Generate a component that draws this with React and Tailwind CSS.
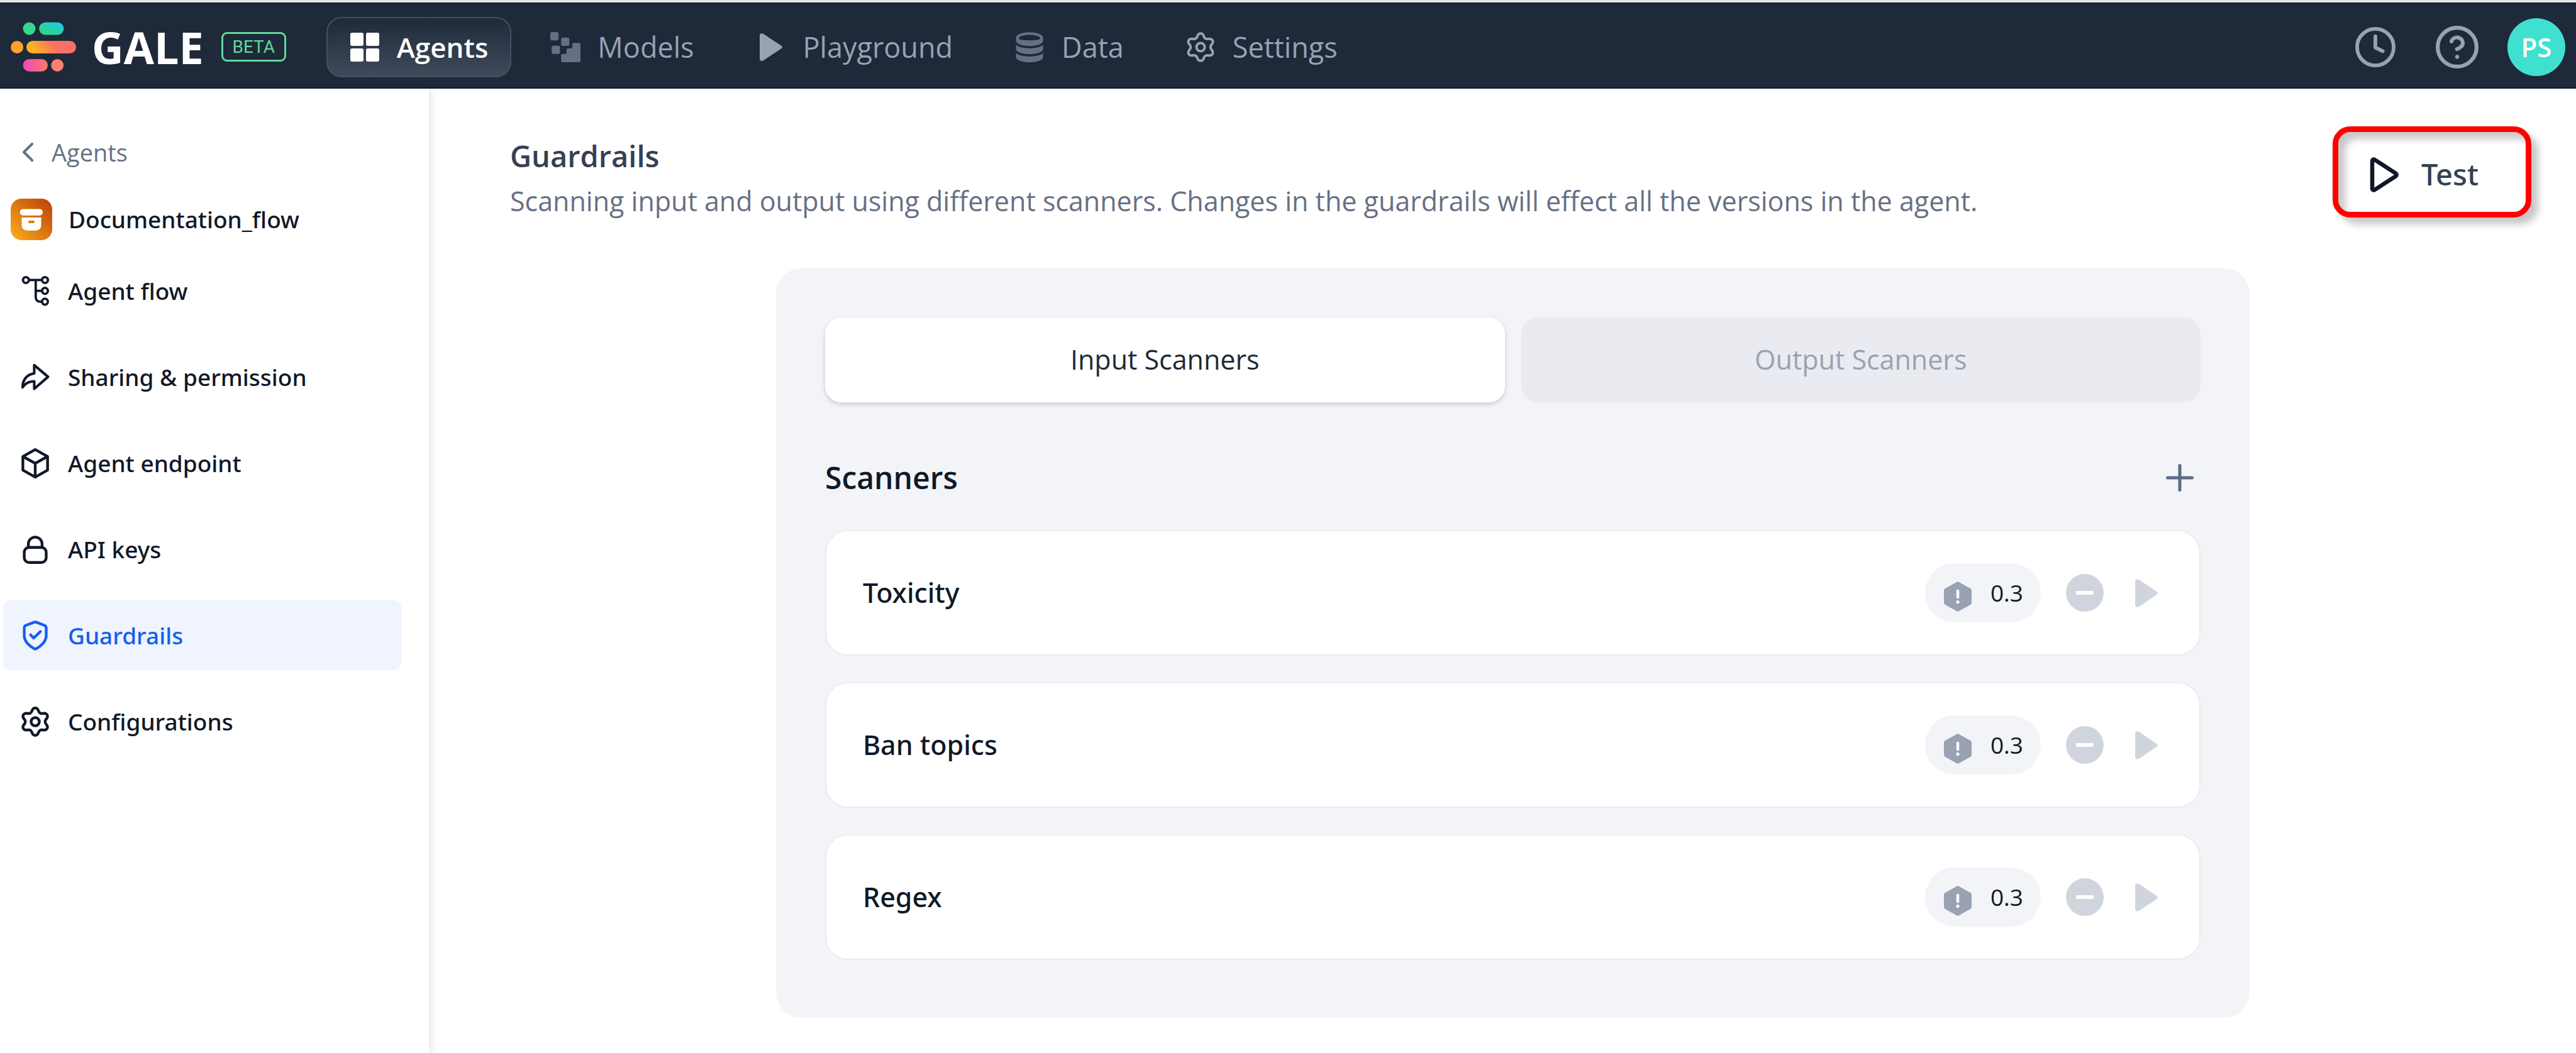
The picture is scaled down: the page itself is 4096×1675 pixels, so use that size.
const iconSlot = "flex w-12 shrink-0 items-center justify-center";

const GEAR =
  "M9.3951 19.3711L9.97955 20.6856C10.1533 21.0768 10.4368 21.4093 10.7958 21.6426C11.1547 21.8759 11.5737 22.0001 12.0018 22C12.4299 22.0001 12.8488 21.8759 13.2078 21.6426C13.5667 21.4093 13.8503 21.0768 14.024 20.6856L14.6084 19.3711C14.8165 18.9047 15.1664 18.5159 15.6084 18.26C16.0532 18.0034 16.5678 17.8941 17.0784 17.9478L18.5084 18.1C18.9341 18.145 19.3637 18.0656 19.7451 17.8713C20.1265 17.6771 20.4434 17.3763 20.6573 17.0056C20.8714 16.635 20.9735 16.2103 20.951 15.7829C20.9285 15.3555 20.7825 14.9438 20.5307 14.5978L19.684 13.4344C19.3825 13.0171 19.2214 12.5148 19.224 12C19.2239 11.4866 19.3865 10.9864 19.6884 10.5711L20.5351 9.40778C20.787 9.06175 20.933 8.65007 20.9555 8.22267C20.978 7.79528 20.8759 7.37054 20.6618 7C20.4479 6.62923 20.131 6.32849 19.7496 6.13423C19.3681 5.93997 18.9386 5.86053 18.5129 5.90556L17.0829 6.05778C16.5722 6.11141 16.0577 6.00212 15.6129 5.74556C15.17 5.48825 14.82 5.09736 14.6129 4.62889L14.024 3.31444C13.8503 2.92317 13.5667 2.59072 13.2078 2.3574C12.8488 2.12408 12.4299 1.99993 12.0018 2C11.5737 1.99993 11.1547 2.12408 10.7958 2.3574C10.4368 2.59072 10.1533 2.92317 9.97955 3.31444L9.3951 4.62889C9.18803 5.09736 8.83798 5.48825 8.3951 5.74556C7.95032 6.00212 7.43577 6.11141 6.9251 6.05778L5.49066 5.90556C5.06499 5.86053 4.6354 5.93997 4.25397 6.13423C3.87255 6.32849 3.55567 6.62923 3.34177 7C3.12759 7.37054 3.02555 7.79528 3.04804 8.22267C3.07052 8.65007 3.21656 9.06175 3.46844 9.40778L4.3151 10.5711C4.61704 10.9864 4.77964 11.4866 4.77955 12C4.77964 12.5134 4.61704 13.0137 4.3151 13.4289L3.46844 14.5922C3.21656 14.9382 3.07052 15.3499 3.04804 15.7773C3.02555 16.2047 3.12759 16.6295 3.34177 17C3.55589 17.3706 3.8728 17.6712 4.25417 17.8654C4.63554 18.0596 5.06502 18.1392 5.49066 18.0944L6.92066 17.9422C7.43133 17.8886 7.94587 17.9979 8.39066 18.2544C8.83519 18.511 9.18687 18.902 9.3951 19.3711Z";

const SHIELD =
  "M20 12C20 16.9084 14.646 20.4784 12.698 21.6149C12.4766 21.744 12.3659 21.8086 12.2097 21.8421C12.0884 21.8681 11.9116 21.8681 11.7903 21.8421C11.6341 21.8086 11.5234 21.744 11.302 21.6149C9.35396 20.4784 4 16.9084 4 12V7.21759C4 6.41808 4 6.01833 4.13076 5.6747C4.24627 5.37113 4.43398 5.10027 4.67766 4.88552C4.9535 4.64243 5.3278 4.50207 6.0764 4.22134L11.4382 2.21067C11.6461 2.13271 11.75 2.09373 11.857 2.07827C11.9518 2.06457 12.0482 2.06457 12.143 2.07827C12.25 2.09373 12.3539 2.13271 12.5618 2.21067L17.9236 4.22134C18.6722 4.50207 19.0465 4.64243 19.3223 4.88552C19.566 5.10027 19.7537 5.37113 19.8692 5.6747C20 6.01833 20 6.41808 20 7.21759V12Z";

function Stroke({ className, width = 2, children, viewBox = "1 1 22 22" }) {
  return (
    <svg
      className={className}
      viewBox={viewBox}
      fill="none"
      stroke="currentColor"
      strokeWidth={width}
      strokeLinecap="round"
      strokeLinejoin="round"
      aria-hidden="true"
    >
      {children}
    </svg>
  );
}

function Gear({ width }) {
  return (
    <Stroke className="size-12" width={width}>
      <path d={GEAR} />
      <circle cx="12" cy="12" r="3" />
    </Stroke>
  );
}

function Logo() {
  return (
    <svg className="h-[79px] w-[104px]" viewBox="18 36.5 110 83" aria-hidden="true">
      <defs>
        <linearGradient id="g1" x1="0" y1="1" x2="1" y2="0">
          <stop offset="0.2" stopColor="#32d583" />
          <stop offset="1" stopColor="#1cc8f5" />
        </linearGradient>
        <linearGradient id="g2" x1="0" y1="0.6" x2="1" y2="0.4">
          <stop offset="0.15" stopColor="#fdb022" />
          <stop offset="0.6" stopColor="#f97066" />
        </linearGradient>
        <linearGradient id="g3" x1="0" y1="0" x2="1" y2="0">
          <stop offset="0" stopColor="#ee46bc" />
          <stop offset="1" stopColor="#fa7a68" />
        </linearGradient>
      </defs>
      <circle cx="49.2" cy="47.3" r="10.6" fill="#35d68e" />
      <rect x="65.7" y="36.7" width="41.6" height="21.2" rx="10.6" fill="url(#g1)" />
      <circle cx="28.7" cy="78.5" r="10.6" fill="#fba12c" />
      <rect x="44.3" y="67.9" width="83.7" height="21.2" rx="10.6" fill="url(#g2)" />
      <rect x="38.7" y="98.5" width="41.6" height="21" rx="10.5" fill="url(#g3)" />
      <circle cx="96.5" cy="109" r="10.5" fill="#fb8070" />
    </svg>
  );
}

const topNav = [
  {
    label: "Agents",
    active: true,
    icon: (
      <svg className="size-[46px]" viewBox="0 0 46 46" fill="currentColor" aria-hidden="true">
        <rect x="0" y="0" width="21" height="21" rx="3" />
        <rect x="25" y="0" width="21" height="21" rx="3" />
        <rect x="0" y="25" width="21" height="21" rx="3" />
        <rect x="25" y="25" width="21" height="21" rx="3" />
      </svg>
    ),
  },
  {
    label: "Models",
    icon: (
      <svg className="size-12 text-[#667085]" viewBox="40 39 153 153" fill="currentColor" aria-hidden="true">
        <rect x="40" y="39" width="42" height="42" rx="9" />
        <rect x="95" y="67" width="42" height="42" rx="9" />
        <rect x="47" y="108" width="42" height="42" rx="9" />
        <path d="M160 94h24q9 0 9 9v80q0 9-9 9h-80q-9 0-9-9v-24q0-9 9-9h18v-19q0-9 9-9h20v-19q0-9 9-9z" />
      </svg>
    ),
  },
  {
    label: "Playground",
    icon: (
      <svg className="h-11 w-9" viewBox="0 0 36 44" fill="currentColor" aria-hidden="true">
        <path d="M0 3.5C0 .6 3-.9 5.600.8L34 19.500c2.600 1.700 2.600 3.300 0 5L5.600 43.200C3 44.900 0 43.400 0 40.500z" />
      </svg>
    ),
  },
  {
    label: "Data",
    icon: (
      <svg className="size-12 text-[#667085]" viewBox="32 37 148 156" fill="currentColor" aria-hidden="true">
        <path
          fillRule="evenodd"
          d="M106 38c39 0 70 12 70 28v16c0 16-31 27-70 27s-70-11-70-27V66c0-16 31-28 70-28zm0 14c-32 0-55 8-55 17s23 11 55 11 55-2 55-11-23-17-55-17z"
        />
        <path d="M36 104c14 12 40 17 70 17s56-5 70-17v20c0 16-31 27-70 27s-70-11-70-27z" />
        <path d="M36 146c14 12 40 17 70 17s56-5 70-17v20c0 16-31 27-70 27s-70-11-70-27z" />
      </svg>
    ),
  },
  { label: "Settings", icon: <Gear width={1.8} /> },
];

function TopBar() {
  return (
    <header className="flex h-[137px] items-center justify-between border-y-2 border-[#101d30] bg-[#1e2939] pt-1 pr-[17px] pl-[17px]">
      <div className="flex items-center">
        <Logo />
        <span className="ml-[25px] text-[70px] leading-none font-bold text-white">GALE</span>
        <span className="ml-7 flex h-[47px] w-[103px] items-center justify-center rounded-[9px] border-3 border-[#5fd99a] font-['Roboto',sans-serif] text-[28px] text-[#5fd99a]">
          BETA
        </span>
        <nav className="ml-16 flex items-center gap-[26px]" aria-label="Primary">
          {topNav.map((item) => (
            <a
              key={item.label}
              href="#"
              aria-current={item.active ? "page" : undefined}
              className={
                item.active
                  ? "flex h-24 items-center gap-[27px] rounded-3xl border-2 border-[#455062] bg-linear-to-b from-[#1f2a3a] to-[#3f4a5a] px-[35px] text-[44px] font-semibold text-white"
                  : "flex h-24 items-center gap-[27px] px-9 text-[45px] text-[#98a2b3]"
              }
            >
              <span className={iconSlot}>{item.icon}</span>
              <span>{item.label}</span>
            </a>
          ))}
        </nav>
      </div>
      <div className="flex items-center text-[#98a2b3]">
        <button type="button" aria-label="History">
          <Stroke className="size-16">
            <circle cx="12" cy="12" r="10" />
            <path d="M12 6v6.200l4 2" />
          </Stroke>
        </button>
        <button type="button" aria-label="Help" className="ml-16">
          <Stroke className="size-[68px]">
            <circle cx="12" cy="12" r="10" />
            <path d="M9.090 9a3 3 0 0 1 5.830 1c0 2-3 3-3 3" />
            <path d="M12 17h.01" />
          </Stroke>
        </button>
        <button
          type="button"
          aria-label="Account"
          className="ml-[46px] flex size-[92px] items-center justify-center rounded-full bg-[#40e0d0] text-[42px] font-semibold text-white"
        >
          PS
        </button>
      </div>
    </header>
  );
}

const sideNav = [
  {
    label: "Agent flow",
    icon: (
      <Stroke className="h-[49px] w-[45px]" width={12} viewBox="108 433 142 157">
        <circle cx="130" cy="457" r="15" />
        <circle cx="227" cy="457" r="15" />
        <circle cx="227" cy="512" r="15" />
        <circle cx="227" cy="567" r="15" />
        <path d="M145 457h67M180 457v86q0 24 22 24h10M180 512h32" />
      </Stroke>
    ),
  },
  {
    label: "Sharing & permission",
    icon: (
      <Stroke className="h-[43px] w-[46px]" width={13} viewBox="107 875 146 137">
        <path d="M175 884l70 59-70 61v-38c-26 0-44 8-59 30 0-38 22-65 59-70z" />
      </Stroke>
    ),
  },
  {
    label: "Agent endpoint",
    icon: (
      <Stroke className="size-12">
        <path d="M12 2l9 5v10l-9 5-9-5V7z" />
        <path d="M3.300 7.200L12 12l8.700-4.800M12 22V12" />
      </Stroke>
    ),
  },
  {
    label: "API keys",
    icon: (
      <Stroke className="size-12">
        <rect x="4" y="10.500" width="16" height="11" rx="3.500" />
        <path d="M7 10.500V8a5 5 0 0 1 10 0v2.500" />
      </Stroke>
    ),
  },
  {
    label: "Guardrails",
    active: true,
    icon: (
      <Stroke className="size-12">
        <path d={SHIELD} />
        <path d="M8.700 11.500l2.200 2.300L15.800 9" />
      </Stroke>
    ),
  },
  { label: "Configurations", icon: <Gear width={2} /> },
];

function Sidebar() {
  return (
    <aside className="w-[682px] shrink-0 pt-[76px] pr-11 pl-[5px] shadow-[0_0_12px_4px_rgba(0,0,0,0.09)]">
      <a href="#" className="ml-[27px] flex h-[50px] items-center gap-[26px] text-[38px] text-[#667085]">
        <Stroke className="h-8 w-6" width={4} viewBox="0 0 24 32">
          <path d="M19 3L6 16l13 13" />
        </Stroke>
        Agents
      </a>
      <div className="mt-[49px] ml-3 flex h-[66px] items-center gap-[26px] font-['Noto_Sans',sans-serif] text-[37px] font-medium text-[#101828]">
        <svg className="size-[66px]" viewBox="55 43 207 207" aria-hidden="true">
          <defs>
            <linearGradient id="box" x1="0" y1="1" x2="1" y2="0">
              <stop offset="0" stopColor="#fbaf20" />
              <stop offset="1" stopColor="#b93f05" />
            </linearGradient>
          </defs>
          <rect x="55" y="43" width="207" height="207" rx="54" fill="url(#box)" />
          <rect x="101" y="95" width="114" height="32" rx="16" fill="#fff" />
          <path d="M110 137h97v37q0 28-28 28h-41q-28 0-28-28z" fill="#fff" />
          <rect x="143" y="152" width="31" height="13" rx="5" fill="#e07f12" />
        </svg>
        <span>Documentation_flow</span>
      </div>
      <nav
        className="mt-[25px] flex flex-col gap-[26px] font-['Noto_Sans',sans-serif] text-[37px] font-medium"
        aria-label="Agent"
      >
        {sideNav.map((item) => (
          <a
            key={item.label}
            href="#"
            aria-current={item.active ? "page" : undefined}
            className={
              item.active
                ? "flex h-[111px] items-center gap-7 rounded-xl bg-[#eff4ff] pl-[27px] text-[#155eef]"
                : "flex h-[111px] items-center gap-7 rounded-xl pl-[27px] text-[#101828]"
            }
          >
            <span className={iconSlot}>{item.icon}</span>
            <span>{item.label}</span>
          </a>
        ))}
      </nav>
    </aside>
  );
}

function ScannerCard({ name, score }) {
  return (
    <li className="flex h-[200px] items-center justify-between rounded-[36px] border-2 border-[#eaecf0] bg-white pr-[66px] pl-[58px]">
      <span className="font-['Noto_Sans',sans-serif] text-[43px] font-medium text-[#101828]">{name}</span>
      <div className="flex items-center">
        <span className="flex h-[94px] items-center gap-[30px] rounded-full bg-[#f2f4f7] pr-[28px] pl-[30px] text-[37px] text-[#101828]">
          <svg className="mb-[17px] h-12 w-11 self-end" viewBox="0 0 44 48" aria-hidden="true">
            <path
              d="M20 1q2-1.300 4 0l18.500 10.300Q44 12.200 44 14v20q0 1.800-1.500 2.700L24 47q-2 1.300-4 0L1.500 36.700Q0 35.800 0 34V14q0-1.800 1.500-2.700z"
              fill="#98a2b3"
            />
            <path d="M22 15v10" stroke="#fff" strokeWidth="4.500" strokeLinecap="round" />
            <circle cx="22" cy="32.500" r="2.600" fill="#fff" />
          </svg>
          {score}
        </span>
        <button type="button" aria-label={`Remove ${name}`} className="ml-10">
          <svg className="size-[60px]" viewBox="0 0 60 60" aria-hidden="true">
            <circle cx="30" cy="30" r="30" fill="#d0d5dd" />
            <rect x="16" y="27" width="28" height="6" rx="1.500" fill="#fff" />
          </svg>
        </button>
        <button type="button" aria-label={`Run ${name}`} className="ml-[50px] text-[#d0d5dd]">
          <svg className="h-[45px] w-9" viewBox="0 0 36 45" fill="currentColor" aria-hidden="true">
            <path d="M0 4C0 .8 3.200-.9 5.800.8L34 19.800q3.600 2.700 0 5.400L5.800 44.200C3.200 45.900 0 44.200 0 41z" />
          </svg>
        </button>
      </div>
    </li>
  );
}

export default function App() {
  return (
    <div className="flex min-h-screen flex-col border-t-4 border-[#e4e4e1] bg-white font-['Open_Sans','Noto_Sans',sans-serif]">
      <TopBar />
      <div className="flex grow">
        <Sidebar />
        <main className="min-w-0 grow pt-[60px] pb-14">
          <div className="flex items-start justify-between pr-[71px] pl-[129px]">
            <div className="pt-3">
              <h1 className="text-[47px] leading-[70px] font-semibold text-[#344054]">Guardrails</h1>
              <p className="text-[43px] leading-[74px] text-[#667085]">
                Scanning input and output using different scanners. Changes in the guardrails will effect all the versions in the agent.
              </p>
            </div>
            <button
              type="button"
              className="flex h-[145px] w-[316px] items-center gap-9 rounded-[28px] border-9 border-[#ff0000] pt-2 pl-[50px] font-['Noto_Sans',sans-serif] text-[47px] font-medium text-[#344054] shadow-[11px_11px_12px_rgba(0,0,0,0.22),inset_11px_11px_12px_rgba(0,0,0,0.22)]"
            >
              <Stroke className="h-14 w-[46px] text-[#101828]" width={6.5} viewBox="0 0 46 56">
                <path d="M4 6.500c0-2.600 2-3.700 4.200-2.300L41 25.500q3.500 2.500 0 5L8.200 51.800C6 53.200 4 52.100 4 49.500z" />
              </Stroke>
              Test
            </button>
          </div>
          <section className="mt-[70px] pr-[96px] pl-[129px]">
            <div className="mx-auto max-w-[2343px] rounded-[40px] bg-[#f2f4f8] px-[78px] pt-[78px] pb-[92px]">
              <div className="grid grid-cols-2 gap-[26px]" role="tablist">
                <button
                  type="button"
                  role="tab"
                  aria-selected="true"
                  className="h-[135px] rounded-[26px] bg-white text-[43px] text-[#1d2939] shadow-[0_3px_6px_1px_rgba(16,24,40,0.14)]"
                >
                  Input Scanners
                </button>
                <button
                  type="button"
                  role="tab"
                  aria-selected="false"
                  className="h-[135px] rounded-[26px] bg-[#eaebf0] text-[43px] text-[#98a2b3]"
                >
                  Output Scanners
                </button>
              </div>
              <div className="mt-[87px] mb-[50px] flex h-[66px] items-center justify-between pr-[11px]">
                <h2 className="text-[48px] font-semibold text-[#101828]">Scanners</h2>
                <button type="button" aria-label="Add scanner" className="text-[#5d6b85]">
                  <Stroke className="size-11" width={5} viewBox="0 0 44 44">
                    <path d="M22 2.500v39M2.500 22h39" />
                  </Stroke>
                </button>
              </div>
              <ul className="flex flex-col gap-[42px]">
                <ScannerCard name="Toxicity" score="0.3" />
                <ScannerCard name="Ban topics" score="0.3" />
                <ScannerCard name="Regex" score="0.3" />
              </ul>
            </div>
          </section>
        </main>
      </div>
    </div>
  );
}
